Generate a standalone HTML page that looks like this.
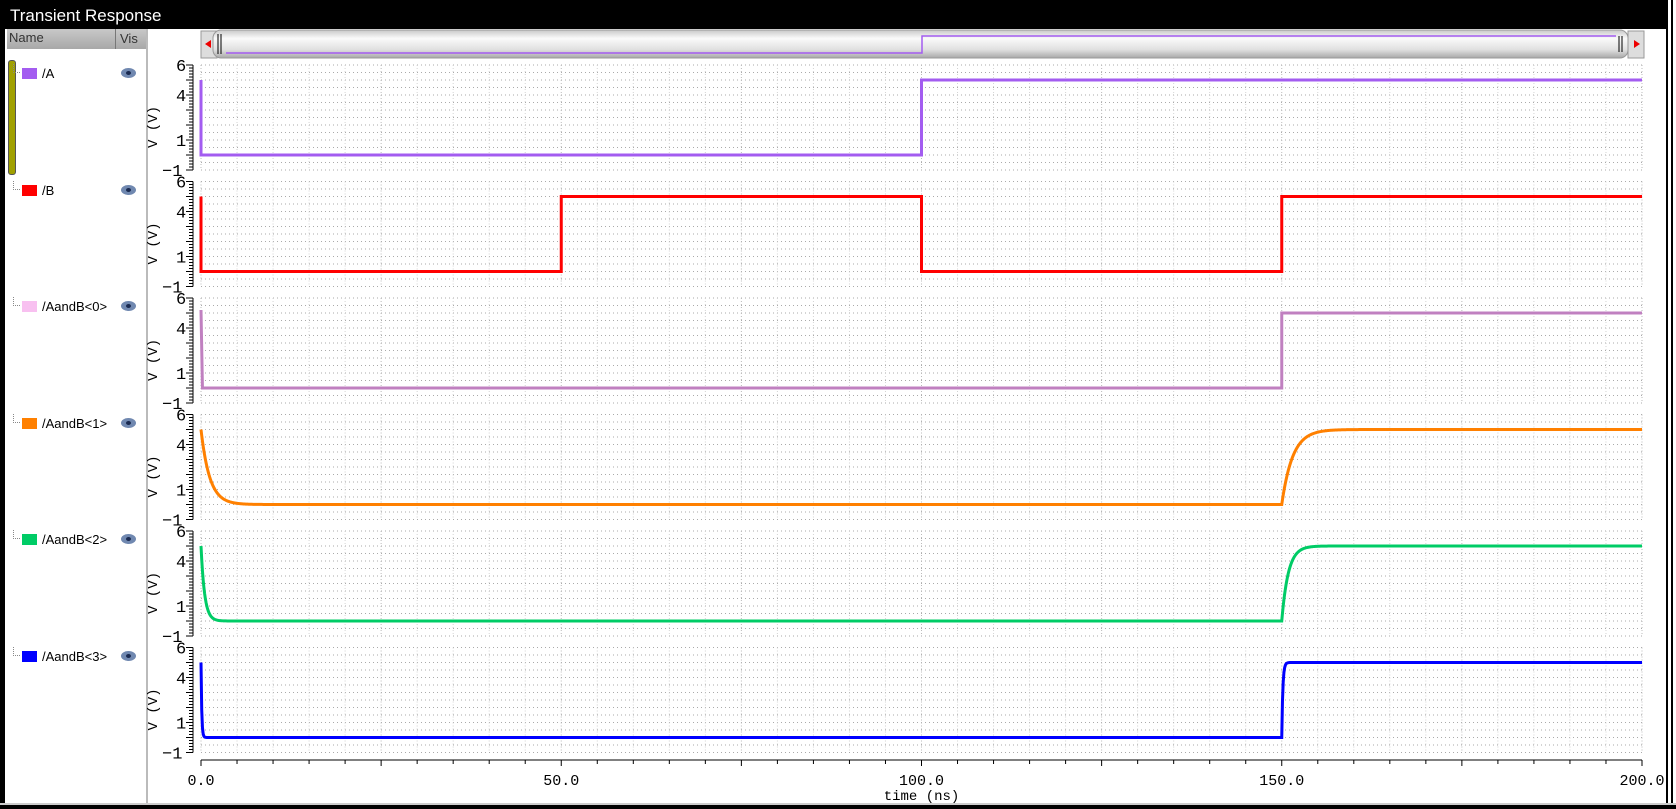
<!DOCTYPE html>
<html><head><meta charset="utf-8"><style>
html,body{margin:0;padding:0;background:#fff;}
body{width:1676px;height:809px;position:relative;overflow:hidden;font-family:"Liberation Sans",sans-serif;}
#title{position:absolute;left:0;top:0;width:1666px;height:29px;background:#000;color:#fff;font-size:17px;line-height:31px;padding-left:10px;box-sizing:border-box;}
#frameL{position:absolute;left:0;top:0;width:5px;height:809px;background:#000;}
#frameR{position:absolute;left:1666px;top:0;width:10px;height:809px;background:#fff;border-left:2px solid #000;box-sizing:border-box;}
#frameR:after{content:"";position:absolute;left:3px;top:0;width:2px;height:809px;background:#000;}
#frameB{position:absolute;left:0;top:803px;width:1676px;height:6px;background:#000;border-top:2px solid #ccc;box-sizing:border-box;}
#left{position:absolute;left:7px;top:29px;width:139px;height:774px;background:#fff;border-right:2px solid #bbb;}
#hdr{position:absolute;left:0;top:0;width:139px;height:20px;background:linear-gradient(#c8c8c8,#a8a8a8);font-size:13px;color:#333;}
#hdr span{position:absolute;top:1px;}
.row{position:absolute;left:0;width:139px;height:16px;font-size:13px;}
.row .dots{position:absolute;left:6px;top:-2px;width:6px;height:8px;border-left:1px dotted #888;border-bottom:1px dotted #888;}
.row .sw{position:absolute;left:15px;top:2px;width:15px;height:11px;}
.row .nm{position:absolute;left:35px;top:0;}
.row .eye{position:absolute;left:114px;top:2px;width:15px;height:10px;border-radius:50%;background:#7088b0;}
.row .eye:after{content:"";position:absolute;left:5px;top:3px;width:5px;height:4px;border-radius:50%;background:#1a2a50;}
#bar{position:absolute;left:8px;top:60px;width:6px;height:113px;background:#a0a000;border:1px solid #555;border-radius:3px;}
</style></head><body>
<div id="title">Transient Response</div>
<div id="frameL"></div><div id="frameR"></div><div id="frameB"></div>
<div id="left">
<div id="hdr"><span style="left:2px">Name</span><span style="left:108px;border-left:1px solid #777;padding-left:4px;top:0;height:20px;line-height:20px">Vis</span></div>
</div>
<div id="bar"></div>
<div id="rows"></div>
<svg id="sv" width="1676" height="809" style="position:absolute;left:0;top:0" xmlns="http://www.w3.org/2000/svg"></svg>
<script>
var NS="http://www.w3.org/2000/svg",sv=document.getElementById('sv');
function el(t,a){var e=document.createElementNS(NS,t);for(var k in a)e.setAttribute(k,a[k]);sv.appendChild(e);return e;}
var names=["/A","/B","/AandB<0>","/AandB<1>","/AandB<2>","/AandB<3>"];
var cols=["#a35cf0","#ff0000","#c080c0","#ff8000","#00cc66","#0000ff"];
var sw=["#a35cf0","#ff0000","#f8c0f0","#ff8000","#00cc66","#0000ff"];
var rh="";
for(var i=0;i<6;i++){var y=66+116.5*i;
rh+='<div class="row" style="top:'+y+'px;left:7px"><div class="dots"></div><div class="sw" style="background:'+sw[i]+'"></div><div class="nm">'+names[i].replace(/</g,'&lt;').replace(/>/g,'&gt;')+'</div><div class="eye"></div></div>';}
document.getElementById('rows').innerHTML=rh;
el('rect',{x:201,y:31,width:16,height:27,fill:'#ddd',stroke:'#999'});
el('path',{d:'M205 44 l6 -4 v8z',fill:'#e00'});
el('rect',{x:1628,y:31,width:16,height:27,fill:'#ddd',stroke:'#999'});
el('path',{d:'M1640 44 l-6 -4 v8z',fill:'#e00'});
var g=el('linearGradient',{id:'gr',x1:0,y1:0,x2:0,y2:1});
[['0','#c8c8c8'],['0.3','#fafafa'],['0.7','#e0e0e0'],['1','#a8a8a8']].forEach(function(s){var st=document.createElementNS(NS,'stop');st.setAttribute('offset',s[0]);st.setAttribute('stop-color',s[1]);g.appendChild(st);});
el('rect',{x:213,y:30,width:1415,height:28,rx:8,fill:'url(#gr)',stroke:'#999'});
el('path',{d:'M218 34 v20 M221 34 v20 M1619 36 v16 M1622 36 v16',stroke:'#000','stroke-width':1});
el('path',{d:'M226 53 H922 V36 H1616',stroke:'#a35cf0','stroke-width':1.5,fill:'none'});
function X(t){return 201+t*7.205;}
for(var i=0;i<6;i++){
 var y0=65+116.5*i; function Y(v){return y0+(6-v)*15;}
 for(var k=0;k<=14;k++){el('line',{x1:201,x2:1642,y1:y0+k*7.5,y2:y0+k*7.5,stroke:'#aaa','stroke-dasharray':'1,3'});}
 for(var t=0;t<=200;t+=5){el('line',{x1:X(t),x2:X(t),y1:y0,y2:y0+105,stroke:(t%25==0?'#bbb':'#d4d4d4'),'stroke-dasharray':'1,2'});}
 el('line',{x1:193,x2:193,y1:y0,y2:y0+105,stroke:'#000'});
 for(var k=0;k<=35;k++){var yy=y0+k*3;el('line',{x1:(k%5==0?186:189),x2:193,y1:yy,y2:yy,stroke:'#000'});}
 [['6',6],['4',4],['1',1],['−1',-1]].forEach(function(l){var tx=el('text',{x:(l[1]<0?162:176),y:Y(l[1])+6,'font-family':'Liberation Mono,monospace','font-size':17,fill:'#000'});tx.textContent=l[0];});
 var tt=el('text',{x:0,y:0,'font-family':'Liberation Mono,monospace','font-size':14,fill:'#000',transform:'translate(157,'+(y0+83)+') rotate(-90)'});tt.textContent='V (V)';
 var p="",c=cols[i];
 function step(segs){return segs.map(function(s){return X(s[0])+','+Y(s[1]);}).join(' ');}
 if(i==0)p=step([[0,5],[0,0],[100,0],[100,5],[200,5]]);
 if(i==1)p=step([[0,5],[0,0],[50,0],[50,5],[100,5],[100,0],[150,0],[150,5],[200,5]]);
 if(i==2)p=step([[0,5.2],[0.2,0],[150,0],[150,5],[200,5]]);
 if(i>=3){var tau=i==3?1.2:(i==4?0.5:0.1),tr=i==3?1.5:(i==4?0.9:0.15),pts=[];
  for(var t=0;t<=12;t+=0.1)pts.push([t,5*Math.exp(-t/tau)]);
  pts.push([150,0]);for(var t=0;t<=12;t+=0.1)pts.push([150+t,5*(1-Math.exp(-t/tr))]);pts.push([200,5]);p=step(pts);}
 el('polyline',{points:p,fill:'none',stroke:c,'stroke-width':3});
}
el('line',{x1:201,x2:1642,y1:760,y2:760,stroke:'#000'});
for(var t=0;t<=200;t+=5){el('line',{x1:X(t),x2:X(t),y1:760,y2:(t%25==0?766:764),stroke:'#000'});}
[[0,'0.0'],[50,'50.0'],[100,'100.0'],[150,'150.0'],[200,'200.0']].forEach(function(l){var tx=el('text',{x:X(l[0]),y:785,'text-anchor':'middle','font-family':'Liberation Mono,monospace','font-size':15,fill:'#000'});tx.textContent=l[1];});
var tx=el('text',{x:X(100),y:800,'text-anchor':'middle','font-family':'Liberation Mono,monospace','font-size':14,fill:'#000'});tx.textContent='time (ns)';
</script>
</body></html>
